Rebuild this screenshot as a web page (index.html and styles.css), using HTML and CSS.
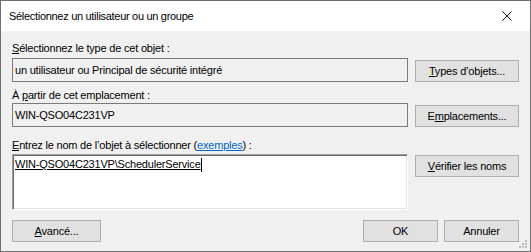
FILE: index.html
```html
<!DOCTYPE html>
<html lang="fr">
<head>
    <meta charset="UTF-8">
    <title>Sélectionnez un utilisateur ou un groupe</title>
    <link rel="stylesheet" href="styles.css">
</head>
<body>
    <div class="window">
        <!-- Title bar -->
        <div class="titlebar">
            <span class="title">Sélectionnez un utilisateur ou un groupe</span>
            <svg class="close" width="10" height="10" viewBox="0 0 10 10">
                <path d="M0.5 0.5 L9.5 9.5 M9.5 0.5 L0.5 9.5" stroke="#111" stroke-width="1" fill="none"/>
            </svg>
        </div>

        <div class="content">
            <div class="caption caption-type"><u>S</u>électionnez le type de cet objet :</div>
            <div class="row">
                <div class="field">un utilisateur ou Principal de sécurité intégré</div>
                <button class="btn btn-side"><u>T</u>ypes d’objets...</button>
            </div>

            <div class="caption caption-location">À <u>p</u>artir de cet emplacement :</div>
            <div class="row">
                <div class="field field-location">WIN-QSO04C231VP</div>
                <button class="btn btn-side">E<u>m</u>placements...</button>
            </div>

            <div class="caption caption-names"><u>E</u>ntrez le nom de l’objet à sélectionner (<a class="link" href="#">exemples</a>) :</div>
            <div class="row row-names">
                <div class="names"><span class="entry">WIN-QSO04C231VP\SchedulerService</span><span class="caret"></span></div>
                <button class="btn btn-side btn-check"><u>V</u>érifier les noms</button>
            </div>

            <div class="footer">
                <button class="btn btn-advanced"><u>A</u>vancé...</button>
                <span class="spacer"></span>
                <button class="btn btn-dialog">OK</button>
                <button class="btn btn-dialog">Annuler</button>
            </div>
        </div>

        <!-- Size grip -->
        <svg class="grip" width="9" height="9" viewBox="0 0 9 9">
            <rect x="6" y="0" width="2" height="2" fill="#bcbcbc"/>
            <rect x="3" y="3" width="2" height="2" fill="#bcbcbc"/>
            <rect x="6" y="3" width="2" height="2" fill="#bcbcbc"/>
            <rect x="0" y="6" width="2" height="2" fill="#bcbcbc"/>
            <rect x="3" y="6" width="2" height="2" fill="#bcbcbc"/>
            <rect x="6" y="6" width="2" height="2" fill="#bcbcbc"/>
        </svg>
    </div>
</body>
</html>
```

FILE: styles.css
```css
body {
    margin: 0;
    font-family: "Liberation Sans", Arial, sans-serif;
    font-size: 11px;
    letter-spacing: -0.2px;
    color: #000;
    background: #fff;
}

.window {
    position: relative;
    width: 531px;
    height: 252px;
    box-sizing: border-box;
    border: 1px solid #707070;
    background: #f0f0f0;
    display: flex;
    flex-direction: column;
}

/* Title bar */
.titlebar {
    height: 30px;
    background: #fff;
    display: flex;
    align-items: center;
    padding: 0 18px 0 8px;
}

.title {
    font-size: 11px;
    letter-spacing: -0.3px;
    flex: 1;
    color: #000;
}

.close {
    display: block;
}

/* Dialog body */
.content {
    padding: 0 11px 0 11px;
    display: flex;
    flex-direction: column;
}

.caption {
    line-height: 13px;
    height: 13px;
}

.caption-type {
    margin-top: 11px;
    margin-bottom: 3px;
}

.caption-location {
    margin-top: 7px;
    margin-bottom: 1px;
}

.caption-names {
    margin-top: 12px;
    margin-bottom: 2px;
}

.link {
    color: #0066cc;
}

.row {
    display: grid;
    grid-template-columns: 1fr 104px;
    column-gap: 7px;
    align-items: end;
}

.field {
    height: 24px;
    box-sizing: border-box;
    border: 1px solid #7a7a7a;
    background: #f0f0f0;
    padding: 0 2px;
    line-height: 22px;
    white-space: nowrap;
}

.row-names {
    align-items: start;
}

.names {
    height: 56px;
    box-sizing: border-box;
    background: #fff;
    border: 1px solid;
    border-color: #a0a0a0 #fff #fff #a0a0a0;
    box-shadow: inset 1px 1px 0 #696969, inset -1px -1px 0 #e3e3e3;
    padding: 3px 2px;
    line-height: 13px;
    display: flex;
    align-items: flex-start;
}

.entry {
    text-decoration: underline;
    white-space: nowrap;
}

.caret {
    width: 1px;
    height: 14px;
    background: #000;
}

.btn {
    font-family: "Liberation Sans", Arial, sans-serif;
    font-size: 11px;
    letter-spacing: -0.2px;
    color: #000;
    background: #e1e1e1;
    border: 1px solid #adadad;
    height: 22px;
    padding: 0;
    margin: 0;
    box-sizing: border-box;
}

.btn-check {
    margin-top: 1px;
}

.footer {
    display: flex;
    gap: 6px;
    margin-top: 10px;
}

.spacer {
    flex: 1;
}

.btn-advanced {
    width: 89px;
}

.btn-dialog {
    width: 75px;
}

.grip {
    position: absolute;
    right: 2px;
    bottom: 2px;
}
```
